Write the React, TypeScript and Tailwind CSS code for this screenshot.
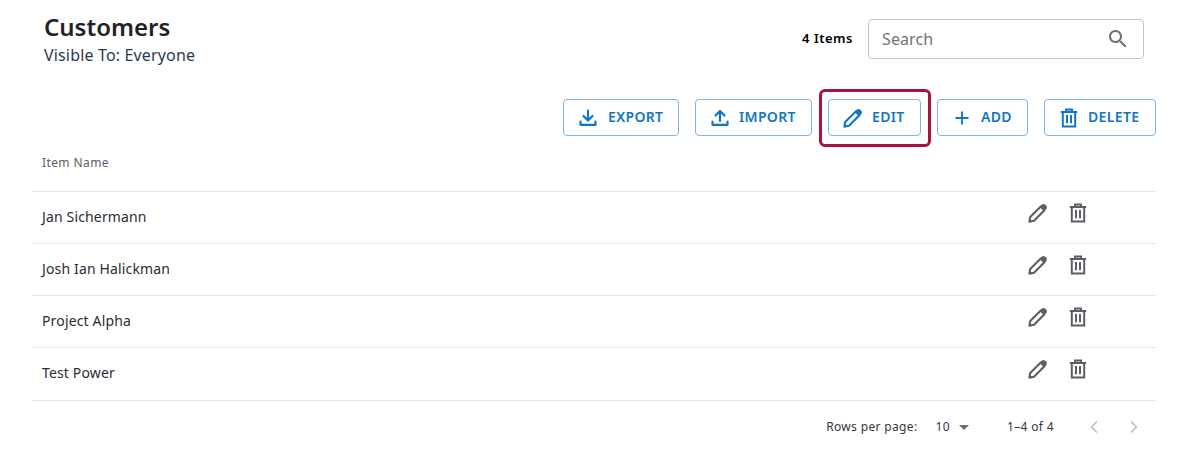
import { ChevronLeft, ChevronRight, Plus } from "lucide-react";

const ROWS = ["Jan Sichermann", "Josh Ian Halickman", "Project Alpha", "Test Power"];

function PencilIcon({ className }: { className?: string }) {
  return (
    <svg viewBox="0 0 20 20" fill="none" stroke="currentColor" strokeWidth="2.1" strokeLinejoin="round" className={className}>
      <path d="M1.4 18.6 L2.2 14 L12.8 3.6 L16.4 7.2 L6 17.8 Z" />
      <path fill="currentColor" strokeWidth="1.4" d="M12.8 3.6 L14.2 2.2 Q15.6 1 17.2 2.6 Q18.9 4.3 17.7 5.8 L16.3 7.2 Z" />
    </svg>
  );
}

function TrashIcon({ className }: { className?: string }) {
  return (
    <svg viewBox="0 0 20 20" fill="none" stroke="currentColor" strokeWidth="2" className={className}>
      <path d="M1.8 4 H18.2" />
      <path d="M7 3.5 V1.6 H13 V3.5" />
      <path d="M3.8 4 V18.4 H16.2 V4" />
      <path d="M8 7 V15.2" />
      <path d="M12 7 V15.2" />
    </svg>
  );
}

function DownloadIcon({ className }: { className?: string }) {
  return (
    <svg viewBox="0 0 18 18" fill="none" stroke="currentColor" strokeWidth="2.2" strokeLinecap="round" strokeLinejoin="round" className={className}>
      <path d="M9 1.5 V11" />
      <path d="M4.5 7 L9 11.5 L13.5 7" />
      <path d="M1.5 12.5 V15.8 H16.5 V12.5" />
    </svg>
  );
}

function UploadIcon({ className }: { className?: string }) {
  return (
    <svg viewBox="0 0 18 18" fill="none" stroke="currentColor" strokeWidth="2.2" strokeLinecap="round" strokeLinejoin="round" className={className}>
      <path d="M9 12 V2.5" />
      <path d="M4.5 6.5 L9 2 L13.5 6.5" />
      <path d="M1.5 12.5 V15.8 H16.5 V12.5" />
    </svg>
  );
}

function SearchIcon({ className }: { className?: string }) {
  return (
    <svg viewBox="0 0 24 24" fill="currentColor" className={className}>
      <path d="M15.5 14h-.79l-.28-.27C15.41 12.59 16 11.11 16 9.5 16 5.91 13.09 3 9.5 3S3 5.91 3 9.5 5.91 16 9.5 16c1.61 0 3.09-.59 4.23-1.57l.27.28v.79l5 4.99L20.49 19l-4.99-5zm-6 0C7.01 14 5 11.99 5 9.5S7.01 5 9.5 5 14 7.01 14 9.5 11.99 14 9.5 14z" />
    </svg>
  );
}

function ActionButton({ label, icon, className }: { label: string; icon: React.ReactNode; className: string }) {
  return (
    <button className={`flex h-[37px] items-center rounded border border-[#7db7e8] pb-[2px] text-sm font-semibold tracking-[0.35px] text-[#0f76c6] ${className}`}>
      <span className="mt-[2px]">{icon}</span>
      {label}
    </button>
  );
}

export default function App() {
  return (
    <div className="h-[455px] w-[1192px] bg-white font-['Noto_Sans',sans-serif] text-[#25282d]">
      {/* Header */}
      <div className="flex items-start justify-between pl-[44px] pr-[48px] pt-[10px]">
        <div>
          <h1 className="text-2xl leading-[33px] font-semibold text-[#1f2329]">Customers</h1>
          <p className="mt-[1px] text-base leading-[22px] tracking-[0.16px] text-[#2c3a4e]">Visible To: Everyone</p>
        </div>
        <div className="mt-[9px] flex items-center gap-[15px]">
          <span className="text-[13px] font-semibold tracking-[0.5px] text-black">4 Items</span>
          <div className="flex h-10 w-[276px] items-center justify-between rounded border border-[#c4c4c4] pl-[13px] pr-[13px]">
            <span className="text-base tracking-[0.1px] text-[#6f7378]">Search</span>
            <SearchIcon className="h-[24px] w-[24px] text-[#6c6f73]" />
          </div>
        </div>
      </div>

      {/* Toolbar */}
      <div className="mt-[33px] flex justify-end gap-4 pr-[36px]">
        <ActionButton
          label="EXPORT"
          className="w-[116px] gap-[11px] pl-[15px]"
          icon={<DownloadIcon className="h-[18px] w-[18px]" />}
        />
        <ActionButton
          label="IMPORT"
          className="w-[117px] gap-[10px] pl-[15px]"
          icon={<UploadIcon className="h-[18px] w-[18px]" />}
        />
        <div className="relative">
          <ActionButton
            label="EDIT"
            className="w-[93px] gap-[9px] pl-[14px]"
            icon={<PencilIcon className="h-[20px] w-[20px]" />}
          />
          <div className="absolute -left-[9px] -right-[10px] -top-[10px] -bottom-[11px] rounded-md border-[3px] border-[#a9123f]" />
        </div>
        <ActionButton
          label="ADD"
          className="w-[91px] gap-[9px] pl-[14px]"
          icon={<Plus className="h-[20px] w-[20px]" strokeWidth={2.2} />}
        />
        <ActionButton
          label="DELETE"
          className="w-[112px] gap-[9px] pl-[14px]"
          icon={<TrashIcon className="h-[20px] w-[20px]" />}
        />
      </div>

      {/* Table */}
      <div className="ml-[32px] mr-[36px]">
        <div className="flex h-[56px] items-center border-b border-[#e5e5e5] pb-[1px] pl-[10px] text-xs tracking-[0.4px] text-[#5c6066]">
          Item Name
        </div>
        {ROWS.map((name, i) => (
          <div
            key={name}
            className={`flex items-center justify-between border-b border-[#e5e5e5] pl-[10px] ${i === 3 ? "h-[53px]" : "h-[52px]"}`}
          >
            <span className={`text-sm tracking-[0.15px] text-[#2a2d33] ${i === 3 ? "mb-[3px]" : "mb-[2px]"}`}>{name}</span>
            <div className={`mr-[68px] flex items-center gap-[20px] text-[#5d5f67] ${i === 3 ? "mb-[11px]" : "mb-[10px]"}`}>
              <PencilIcon className="h-[20px] w-[20px]" />
              <TrashIcon className="h-[20px] w-[20px]" />
            </div>
          </div>
        ))}
      </div>

      {/* Pagination */}
      <div className="mr-[46px] mt-[16px] flex items-center justify-end text-xs tracking-[0.35px] text-[#33373d]">
        <span>Rows per page:</span>
        <span className="ml-[18px]">10</span>
        <span className="ml-[9px] h-0 w-0 border-x-[5px] border-t-[5px] border-x-transparent border-t-[#6c6f73]" />
        <span className="ml-[38px]">1–4 of 4</span>
        <ChevronLeft className="ml-[30px] h-5 w-5 text-[#bdbdbd]" />
        <ChevronRight className="ml-[20px] mr-[2px] h-5 w-5 text-[#bdbdbd]" />
      </div>
    </div>
  );
}
